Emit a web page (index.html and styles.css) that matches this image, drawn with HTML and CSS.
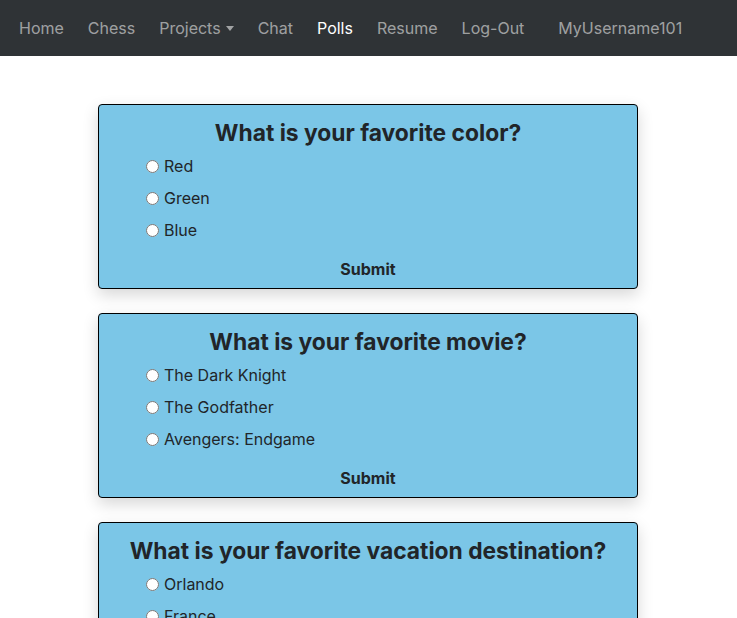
FILE: index.html
```html
<!DOCTYPE html>
<html lang="en">
<head>
<meta charset="utf-8">
<title>Polls</title>
<link rel="stylesheet" href="styles.css">
</head>
<body>
<nav class="navbar">
  <a class="nav-link" href="#">Home</a>
  <a class="nav-link" href="#">Chess</a>
  <a class="nav-link dropdown" href="#">Projects<span class="caret"></span></a>
  <a class="nav-link" href="#">Chat</a>
  <a class="nav-link active" href="#">Polls</a>
  <a class="nav-link" href="#">Resume</a>
  <a class="nav-link" href="#">Log-Out</a>
  <span class="nav-user">MyUsername101</span>
</nav>
<main class="polls">
  <form class="poll">
    <h3 class="poll-title">What is your favorite color?</h3>
    <label class="option"><input type="radio" name="q1"><span>Red</span></label>
    <label class="option"><input type="radio" name="q1"><span>Green</span></label>
    <label class="option"><input type="radio" name="q1"><span>Blue</span></label>
    <button class="submit" type="button">Submit</button>
  </form>
  <form class="poll">
    <h3 class="poll-title">What is your favorite movie?</h3>
    <label class="option"><input type="radio" name="q2"><span>The Dark Knight</span></label>
    <label class="option"><input type="radio" name="q2"><span>The Godfather</span></label>
    <label class="option"><input type="radio" name="q2"><span>Avengers: Endgame</span></label>
    <button class="submit" type="button">Submit</button>
  </form>
  <form class="poll">
    <h3 class="poll-title">What is your favorite vacation destination?</h3>
    <label class="option"><input type="radio" name="q3"><span>Orlando</span></label>
    <label class="option"><input type="radio" name="q3"><span>France</span></label>
    <label class="option"><input type="radio" name="q3"><span>Hawaii</span></label>
    <button class="submit" type="button">Submit</button>
  </form>
</main>
</body>
</html>
```
FILE: styles.css
```css
* { box-sizing: border-box; }
html, body { margin: 0; padding: 0; }
body {
  font-family: Inter, "Noto Sans", "Liberation Sans", sans-serif;
  color: #212529;
  background: #fff;
  font-size: 16px;
}
.navbar {
  height: 56px;
  background: #2f3336;
  display: flex;
  align-items: center;
  padding: 0 7px;
}
.nav-link {
  color: rgba(255,255,255,.55);
  text-decoration: none;
  padding: 0 12px;
  font-size: 16px;
  line-height: 24px;
  display: flex;
  align-items: center;
}
.nav-link.active { color: #fff; }
.caret {
  display: inline-block;
  margin-left: 5px;
  width: 0; height: 0;
  border-left: 4px solid transparent;
  border-right: 4px solid transparent;
  border-top: 5px solid currentColor;
}
.nav-user {
  color: rgba(255,255,255,.55);
  margin-left: 22px;
  font-size: 16px;
}
.polls {
  display: flex;
  flex-direction: column;
  align-items: center;
  gap: 24px;
  padding: 48px 1px 0 0;
}
.poll {
  width: 540px;
  background: #7bc6e7;
  border: 1px solid #000;
  border-radius: 4px;
  box-shadow: 0 6px 16px rgba(0,0,0,.16);
  padding: 11px 0 6px 42px;
  display: flex;
  flex-direction: column;
}
.poll-title {
  margin: 0 0 0 -42px;
  font-size: 22.8px;
  font-weight: 700;
  line-height: 34px;
  text-align: center;
}
.option {
  height: 32px;
  display: flex;
  align-items: center;
  font-size: 16px;
}
.option input {
  margin: 0 5px 0 5px;
  width: 13px; height: 13px;
}
.submit {
  margin: 10px 0 0 -42px;
  align-self: stretch;
  background: none;
  border: 0;
  font: inherit;
  font-weight: 700;
  color: #212529;
  height: 26px;
  cursor: pointer;
}
```
